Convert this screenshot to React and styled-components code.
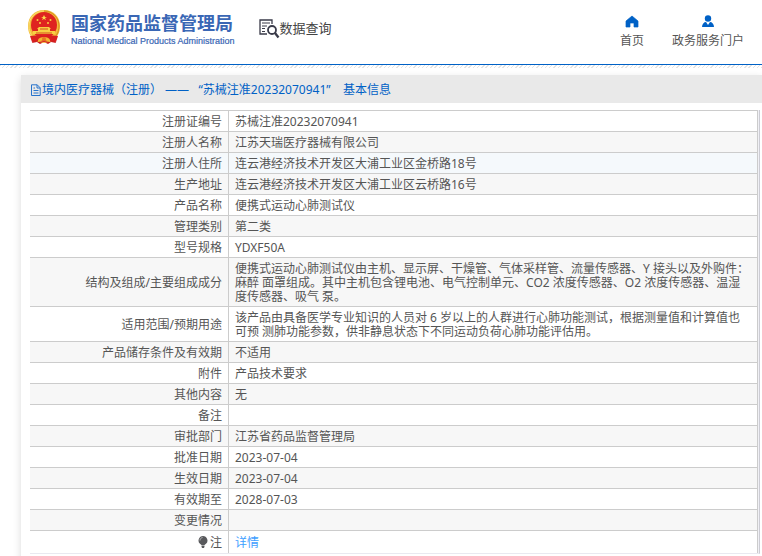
import React from "react";
import styled, { createGlobalStyle } from "styled-components";

const Global = createGlobalStyle`
  * { box-sizing: border-box; }
  html, body { margin: 0; background: #fff; }
  body { overflow: hidden; font: 12px/14px "Noto Sans", "Noto Sans CJK SC", sans-serif; color: #555; }
`;

const Header = styled.header`
  display: flex;
  align-items: flex-start;
  height: 65px;
  padding: 0 18px 0 26px;
  border-bottom: 1px solid #0061c6;
`;

const Hatch = styled.div`
  height: 3px;
  background: repeating-linear-gradient(135deg, #e4e4e4 0 1px, #fff 1px 3px);
`;

const Brand = styled.a`
  display: flex;
  gap: 9px;
  padding-top: 9px;
  color: #3a67b5;
  text-decoration: none;
  white-space: nowrap;
`;

const BrandName = styled.span`
  display: block;
  padding-bottom: 1px;
  font: 700 18px/26px "Noto Sans CJK SC", sans-serif;
`;

const BrandSub = styled.span`
  display: block;
  font: 9px/10px "Liberation Sans", Arial, sans-serif;
  -webkit-text-stroke: 0.2px #3a67b5;
`;

const Section = styled.div`
  display: flex;
  align-items: center;
  margin: 17px auto 0 24px;
  color: #444;
  font-size: 13px;
  line-height: 22px;
  white-space: nowrap;
`;

const Nav = styled.nav`
  display: flex;
  gap: 28px;
  padding-top: 15px;
`;

const NavLink = styled.a`
  display: flex;
  flex-direction: column;
  align-items: center;
  gap: 5px;
  color: #555;
  line-height: 16px;
  text-decoration: none;
  white-space: nowrap;
`;

const Panel = styled.main`
  margin: 7px 0 0 21px;
  padding-bottom: 20px;
  box-shadow: 0 3px 8px rgba(0, 0, 0, 0.15);
`;

const PanelTitle = styled.h1`
  display: flex;
  align-items: center;
  height: 28px;
  margin: 0;
  padding: 2px 9px 0;
  background: #e9e9e9;
  color: #0061c6;
  font-size: 12px;
  font-weight: 400;
  white-space: pre;
`;

const TableFrame = styled.div`
  margin: 7px 2px 0 9px;
  padding-right: 1px;
  border-right: 1px solid #ccccd4;
  border-bottom: 1px solid #e9e9f0;
  background: #f0f0f5;
`;

const Table = styled.table`
  width: 100%;
  border-collapse: separate;
  border-spacing: 0;
  border-top: 1px solid #ccc;
  border-right: 1px solid #ccc;
  background: #fff;
`;

const backgrounds = { plain: "#fff", striped: "#f7f7f7", active: "#f5f9fc" };

const Row = styled.tr`
  background: ${({ $tone }) => backgrounds[$tone]};
  &:last-child > * { height: 22px; border-bottom: 0; }
`;

const Label = styled.th`
  width: 199px;
  padding: 4px 6px 2px;
  border-right: 1px solid #ccc;
  border-bottom: 1px solid #ccc;
  font-weight: 400;
  text-align: right;
`;

const Value = styled.td`
  height: 21px;
  padding: 4px 6px 2px;
  border-bottom: 1px solid #ccc;
`;

const DetailLink = styled.a`
  color: #409eff;
  text-decoration: none;
`;

const Icon = styled.svg`
  display: block;
  flex: none;
`;

const InlineIcon = styled.svg`
  margin-right: 2px;
  vertical-align: -1px;
`;

function Emblem() {
  return (
    <Icon width="36" height="36" viewBox="0 0 36 36" aria-hidden="true">
      <path d="M8 29l-2 5 5-1 3 2 4-2 4 2 3-2 5 1-2-5z" fill="#c81c20" />
      <path d="M18 1C8 1 2 8 2 17c0 7 3 12 8 15l8 2 8-2c5-3 8-8 8-15C34 8 28 1 18 1z" fill="#f3bd3b" />
      <path d="M18 2C9 2 3 9 3 17c0 6 3 11 7 14" fill="none" stroke="#fbe073" strokeWidth="1" />
      <path d="M18 2c9 0 15 7 15 15 0 6-3 11-7 14" fill="none" stroke="#d48a1e" strokeWidth="1" />
      <circle cx="18" cy="16" r="13" fill="#df2320" />
      <path d="M18 6l1 2h2l-2 1 1 2-2-1-2 1 1-2-2-1h2z" fill="#fbdc4c" />
      <g fill="#f8cf43">
        <circle cx="11.500" cy="11" r="1" /><circle cx="24.500" cy="11" r="1" />
        <circle cx="14" cy="14" r="1" /><circle cx="22" cy="14" r="1" />
        <path d="M13 18h10l2 2h-1v2h5v3H7v-3h5v-2h-1z" />
      </g>
      <path d="M14 20h8M10 24h16" stroke="#d7511f" />
      <path d="M4 27l10-1 4 2 4-2 10 1-2 6-6-1-6 1-6-1-6 1z" fill="#d91f20" />
      <path d="M12 31c1-4 11-4 12 0v2l-6-2-6 2z" fill="#f2b631" />
      <circle cx="18" cy="30" r="2" fill="#e97522" />
    </Icon>
  );
}

function SearchDocument() {
  return (
    <Icon width="21" height="22" viewBox="0 0 21 22" fill="none" stroke="#3a3b49" aria-hidden="true">
      <path d="M8 17H1V3h12v4" strokeWidth="1.300" />
      <path d="M3 6h8M3 9h5M3 11.500h3M3 14.500h3" />
      <circle cx="13" cy="13" r="4" strokeWidth="1.800" />
      <path d="M16 16l3.500 4.500" strokeWidth="2.300" />
    </Icon>
  );
}

function Home() {
  return (
    <Icon width="14" height="13" viewBox="0 0 14 13" fill="#0061c6" aria-hidden="true">
      <path d="M7 1l6 5v6H9V8H5v4H1V6z" stroke="#0061c6" strokeWidth=".7" strokeLinejoin="round" />
    </Icon>
  );
}

function Person() {
  return (
    <Icon width="14" height="13" viewBox="0 0 14 13" fill="#0061c6" aria-hidden="true">
      <circle cx="7" cy="3.500" r="3.200" />
      <path d="M1 12c0-3 2-5 4-5l2 3 2-3c2 0 4 2 4 5z" />
    </Icon>
  );
}

function Document() {
  return (
    <Icon width="12" height="12" viewBox="0 0 12 12" fill="none" stroke="#2874cc" aria-hidden="true">
      <path d="M1.500.8h5.700l3 3v7.700H1.500zM7 .8V4h3M3.500 4H5M3.500 6.500h5M3.500 9h5" />
    </Icon>
  );
}

function Bulb() {
  return (
    <InlineIcon width="10" height="12" viewBox="0 0 10 12" aria-hidden="true">
      <path d="M5 0a4.500 4.500 0 0 0-3 7.800L3.500 9h3L8 7.800A4.500 4.500 0 0 0 5 0zM3.500 9.500h3v1L6 12H4l-.5-1.500z" fill="#58595c" />
      <path d="M2 4.500c0-1.500 1-2.700 2.600-3" fill="none" stroke="#ddd" strokeWidth=".7" />
    </InlineIcon>
  );
}

const rows = [
  ["注册证编号", "苏械注准20232070941"],
  ["注册人名称", "江苏天瑞医疗器械有限公司"],
  ["注册人住所", "连云港经济技术开发区大浦工业区金桥路18号"],
  ["生产地址", "连云港经济技术开发区大浦工业区云桥路16号"],
  ["产品名称", "便携式运动心肺测试仪"],
  ["管理类别", "第二类"],
  ["型号规格", "YDXF50A"],
  ["结构及组成/主要组成成分", "便携式运动心肺测试仪由主机、显示屏、干燥管、气体采样管、流量传感器、Y 接头以及外购件：麻醉 面罩组成。其中主机包含锂电池、电气控制单元、CO2 浓度传感器、O2 浓度传感器、温湿度传感器、吸气 泵。"],
  ["适用范围/预期用途", "该产品由具备医学专业知识的人员对 6 岁以上的人群进行心肺功能测试，根据测量值和计算值也可预 测肺功能参数，供非静息状态下不同运动负荷心肺功能评估用。"],
  ["产品储存条件及有效期", "不适用"],
  ["附件", "产品技术要求"],
  ["其他内容", "无"],
  ["备注", ""],
  ["审批部门", "江苏省药品监督管理局"],
  ["批准日期", "2023-07-04"],
  ["生效日期", "2023-07-04"],
  ["有效期至", "2028-07-03"],
  ["变更情况", ""],
];

const toneOf = (index) => (index === 2 ? "active" : index % 2 ? "striped" : "plain");

export default function App() {
  return (
    <>
      <Global />
      <Header lang="zh-CN">
        <Brand href="#">
          <Emblem />
          <span>
            <BrandName>国家药品监督管理局</BrandName>
            <BrandSub>National Medical Products Administration</BrandSub>
          </span>
        </Brand>
        <Section><SearchDocument />数据查询</Section>
        <Nav>
          <NavLink href="#"><Home />首页</NavLink>
          <NavLink href="#"><Person />政务服务门户</NavLink>
        </Nav>
      </Header>
      <Hatch />
      <Panel lang="zh-CN">
        <PanelTitle><Document />{"境内医疗器械（注册） ——   “苏械注准20232070941”    基本信息"}</PanelTitle>
        <TableFrame>
          <Table>
            <tbody>
              {rows.map(([label, value], index) => (
                <Row key={label} $tone={toneOf(index)}>
                  <Label scope="row">{label}</Label>
                  <Value>{value}</Value>
                </Row>
              ))}
              <Row $tone="plain">
                <Label scope="row"><Bulb />注</Label>
                <Value><DetailLink href="#">详情</DetailLink></Value>
              </Row>
            </tbody>
          </Table>
        </TableFrame>
      </Panel>
    </>
  );
}
